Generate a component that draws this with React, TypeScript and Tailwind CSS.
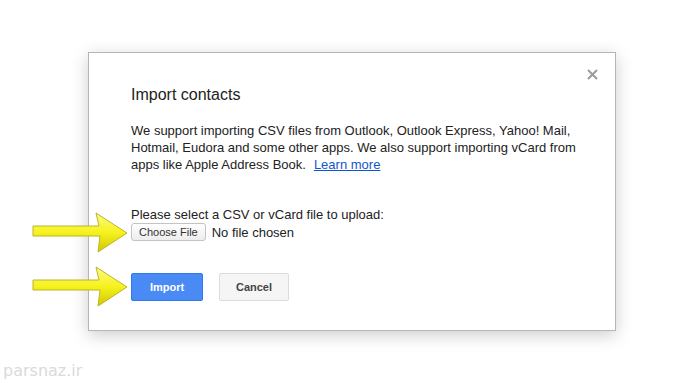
import React from "react";

function Arrow({ top }: { top: number }) {
  // yellow pointer drawn over the page, tip sits just left of the button
  return (
    <svg
      className="absolute left-[30px]"
      style={{ top }}
      width="102"
      height="46"
      viewBox="0 0 102 46"
    >
      <defs>
        <linearGradient id={`ag${top}`} x1="0" y1="0" x2="0" y2="1">
          <stop offset="0" stopColor="#fbfb86" />
          <stop offset="0.5" stopColor="#f6f21c" />
          <stop offset="1" stopColor="#cfc800" />
        </linearGradient>
      </defs>
      <path
        d="M3 16 L69 16 L66 3 L97 23 L68 42 L70 26 L3 26 Z"
        fill={`url(#ag${top})`}
        stroke="#bdb52a"
        strokeWidth="1"
        strokeLinejoin="round"
      />
    </svg>
  );
}

export default function App() {
  return (
    <div className="relative w-[700px] h-[383px] bg-white overflow-hidden font-['Liberation_Sans',Arial,sans-serif]">
      <div className="pt-[52px] pl-[88px]">
        <div className="relative w-[528px] h-[279px] bg-white border border-[#b5b5b5] shadow-[0_4px_16px_rgba(0,0,0,0.2)] pl-[42px] pr-[30px] pt-[32px]">
          <button className="absolute right-[17px] top-[16px] leading-none">
            <svg width="11" height="11" viewBox="0 0 11 11">
              <path d="M1 1 L10 10 M10 1 L1 10" stroke="#9a9a9a" strokeWidth="2" />
            </svg>
          </button>
          <h2 className="text-[16px] leading-[20px] text-[#222]">Import contacts</h2>
          <div className="mt-[17px] text-[13px] leading-[17px] text-[#222]">
            <p>
              We support importing CSV files from Outlook, Outlook Express, Yahoo! Mail,
              Hotmail, Eudora and some other apps. We also support importing vCard from
            </p>
            <p className="flex gap-[8px]">
              <span>apps like Apple Address Book.</span>
              <a className="text-[#15c] underline">Learn more</a>
            </p>
          </div>
          <p className="mt-[33px] text-[13px] leading-[17px] text-[#222]">
            Please select a CSV or vCard file to upload:
          </p>
          <div className="h-[18px] flex items-center gap-[6px]">
            <span className="h-[18px] px-[7px] flex items-center rounded-[3px] border border-[#c4c4c4] bg-gradient-to-b from-white to-[#ededed] text-[11px] text-[#333]">
              Choose File
            </span>
            <span className="text-[13px] leading-[17px] text-[#222]">No file chosen</span>
          </div>
          <div className="mt-[32px] flex gap-[16px]">
            <span className="w-[72px] h-[28px] flex items-center justify-center rounded-[2px] border border-[#3079ed] bg-[#4a8af4] text-[11px] font-bold text-white">
              Import
            </span>
            <span className="w-[70px] h-[28px] flex items-center justify-center rounded-[2px] border border-[#dcdcdc] bg-[#f5f5f5] text-[11px] font-bold text-[#444]">
              Cancel
            </span>
          </div>
        </div>
      </div>
      <Arrow top={210} />
      <Arrow top={264} />
      <div className="absolute left-[3px] top-[361px] text-[16px] leading-[20px] text-[#dadada] font-['DejaVu_Sans',sans-serif]">
        parsnaz.ir
      </div>
    </div>
  );
}
